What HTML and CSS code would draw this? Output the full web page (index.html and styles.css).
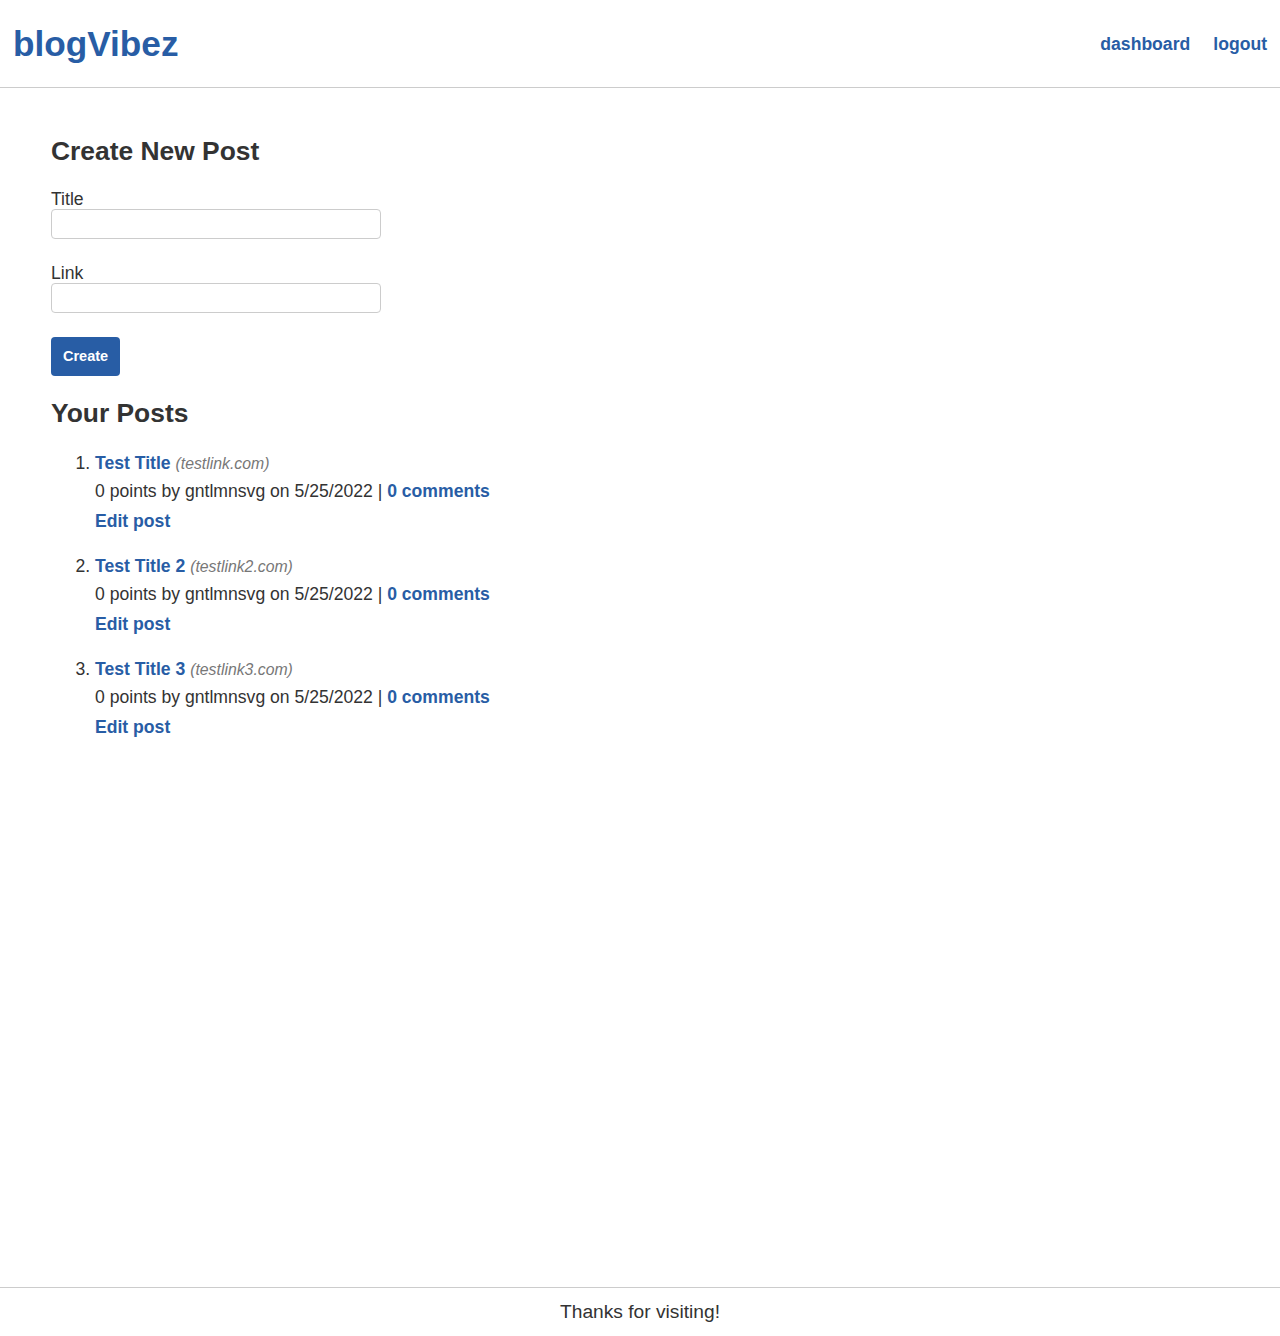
FILE: index.html
```html
<!DOCTYPE html>
<html lang="en">
<head>
<meta charset="utf-8">
<title>blogVibez</title>
<link rel="stylesheet" href="styles.css">
</head>
<body>
<header class="site-header">
  <a class="logo" href="#">blogVibez</a>
  <nav class="nav">
    <a href="#">dashboard</a>
    <a href="#">logout</a>
  </nav>
</header>
<main class="main">
  <h2 class="heading">Create New Post</h2>
  <form class="post-form">
    <div class="field">
      <label class="label" for="title">Title</label>
      <input class="input" id="title" type="text">
    </div>
    <div class="field">
      <label class="label" for="link">Link</label>
      <input class="input" id="link" type="text">
    </div>
    <button class="btn" type="button">Create</button>
  </form>
  <h2 class="heading heading-posts">Your Posts</h2>
  <ol class="post-list">
    <li class="post">
      <div class="post-title-row"><a class="post-title" href="#">Test Title</a> <span class="post-url">(testlink.com)</span></div>
      <div class="post-meta">0 points by gntlmnsvg on 5/25/2022 | <a href="#">0 comments</a></div>
      <a class="edit" href="#">Edit post</a>
    </li>
    <li class="post">
      <div class="post-title-row"><a class="post-title" href="#">Test Title 2</a> <span class="post-url">(testlink2.com)</span></div>
      <div class="post-meta">0 points by gntlmnsvg on 5/25/2022 | <a href="#">0 comments</a></div>
      <a class="edit" href="#">Edit post</a>
    </li>
    <li class="post">
      <div class="post-title-row"><a class="post-title" href="#">Test Title 3</a> <span class="post-url">(testlink3.com)</span></div>
      <div class="post-meta">0 points by gntlmnsvg on 5/25/2022 | <a href="#">0 comments</a></div>
      <a class="edit" href="#">Edit post</a>
    </li>
  </ol>
</main>
<footer class="site-footer">Thanks for visiting!</footer>
</body>
</html>
```

FILE: styles.css
```css
* { box-sizing: border-box; }
html, body { margin: 0; padding: 0; }
body {
  font-family: "Liberation Sans", Arial, sans-serif;
  font-size: 17.6px;
  color: #333;
  background: #fff;
  min-height: 100vh;
  display: flex;
  flex-direction: column;
}
a { color: #285da5; text-decoration: none; font-weight: bold; }

.site-header {
  height: 88px;
  border-bottom: 1px solid #ccc;
  display: flex;
  align-items: center;
  justify-content: space-between;
  padding: 0 13px 0 13px;
}
.logo { font-size: 35.2px; line-height: 1; }
.nav { display: flex; gap: 23px; padding-top: 2px; }
.nav a { font-size: 17.6px; }

.main {
  flex: 1;
  padding: 48px 51px 0 51px;
}
.heading {
  font-size: 26.4px;
  margin: 0 0 23px 0;
  line-height: 30px;
  color: #333;
}
.post-form { display: flex; flex-direction: column; align-items: flex-start; }
.field { display: flex; flex-direction: column; margin-bottom: 24px; }
.label { line-height: 20px; }
.input {
  width: 330px;
  height: 30px;
  border: 1px solid #ccc;
  border-radius: 4px;
  font: inherit;
}
.btn {
  background: #285da5;
  color: #fff;
  border: none;
  border-radius: 4px;
  font-family: inherit;
  font-weight: bold;
  font-size: 14.5px;
  height: 39px;
  padding: 0 12px 2px 12px;
}
.heading-posts { margin-top: 22px; margin-bottom: 25px; }

.post-list { margin: 0; padding-left: 44px; }
.post { margin-bottom: 25px; line-height: 20px; }
.post-title-row { margin-bottom: 7px; }
.post-url { font-style: italic; color: #777; font-size: 15.8px; }
.post-meta { margin-bottom: 10px; }
.edit { display: inline-block; }

.site-footer {
  border-top: 1px solid #ccc;
  height: 49px;
  display: flex;
  align-items: center;
  justify-content: center;
  font-size: 19.2px;
  color: #333;
}
```
